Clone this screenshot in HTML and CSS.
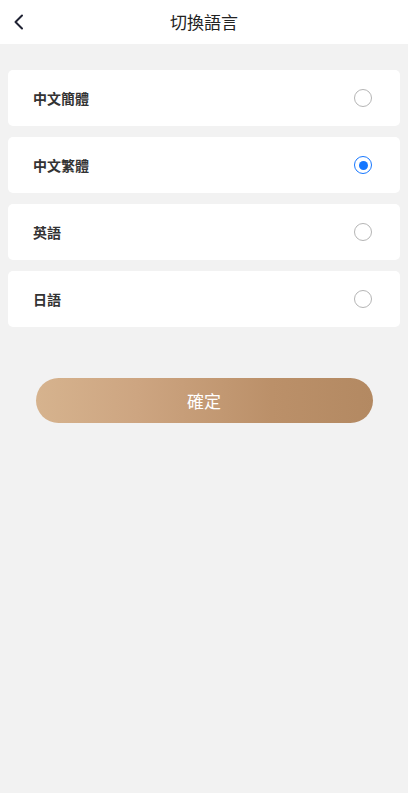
FILE: index.html
```html
<!DOCTYPE html>
<html lang="zh-Hant">
<head>
<meta charset="utf-8">
<title>切換語言</title>
<link rel="stylesheet" href="styles.css">
</head>
<body>
<header class="nav">
  <span class="back">
    <svg width="12" height="16" viewBox="0 0 12 16"><path d="M9 1.5 L2.5 8 L9 14.5" fill="none" stroke="#1f2233" stroke-width="2" stroke-linecap="round" stroke-linejoin="round"/></svg>
  </span>
  <h1 class="title">切換語言</h1>
</header>
<main class="content">
  <ul class="list">
    <li class="item"><span class="label">中文簡體</span><span class="radio"></span></li>
    <li class="item"><span class="label">中文繁體</span><span class="radio checked"></span></li>
    <li class="item"><span class="label">英語</span><span class="radio"></span></li>
    <li class="item"><span class="label">日語</span><span class="radio"></span></li>
  </ul>
  <button class="confirm">確定</button>
</main>
</body>
</html>
```
FILE: styles.css
```css
* { box-sizing: border-box; }
html, body { margin: 0; padding: 0; }
body {
  background: #f2f2f2;
  font-family: "Noto Sans CJK TC", "Noto Sans CJK SC", sans-serif;
  color: #333;
  min-height: 793px;
}
.nav {
  height: 44px;
  background: #fff;
  display: flex;
  align-items: center;
  justify-content: center;
  position: relative;
}
.back {
  position: absolute;
  left: 13px;
  top: 14px;
  display: flex;
}
.title {
  margin: 0;
  font-size: 17px;
  font-weight: 400;
  color: #222;
  line-height: 44px;
}
.content { padding: 26px 8px 0; }
.list { list-style: none; margin: 0; padding: 0; display: flex; flex-direction: column; gap: 11px; }
.item {
  height: 56px;
  background: #fff;
  border-radius: 5px;
  display: flex;
  align-items: center;
  justify-content: space-between;
  padding: 0 28px 0 25px;
}
.label { font-size: 14px; font-weight: 700; color: #333; }
.radio {
  width: 18px; height: 18px;
  border-radius: 50%;
  border: 1px solid #b5b5b5;
  position: relative;
}
.radio.checked { border-color: #1677ff; }
.radio.checked::after {
  content: "";
  position: absolute;
  left: 3.5px; top: 3.5px;
  width: 9px; height: 9px;
  border-radius: 50%;
  background: #1677ff;
}
.confirm {
  display: block;
  margin: 51px auto 0;
  width: 337px;
  height: 45px;
  border: none;
  border-radius: 23px;
  background: linear-gradient(90deg, #d6b38e 0%, #cda581 30%, #bb9069 70%, #b38962 100%);
  color: #fff;
  font-family: "Noto Sans CJK TC", "Noto Sans CJK SC", sans-serif;
  font-size: 17px;
  position: relative;
  left: 0;
}
```
